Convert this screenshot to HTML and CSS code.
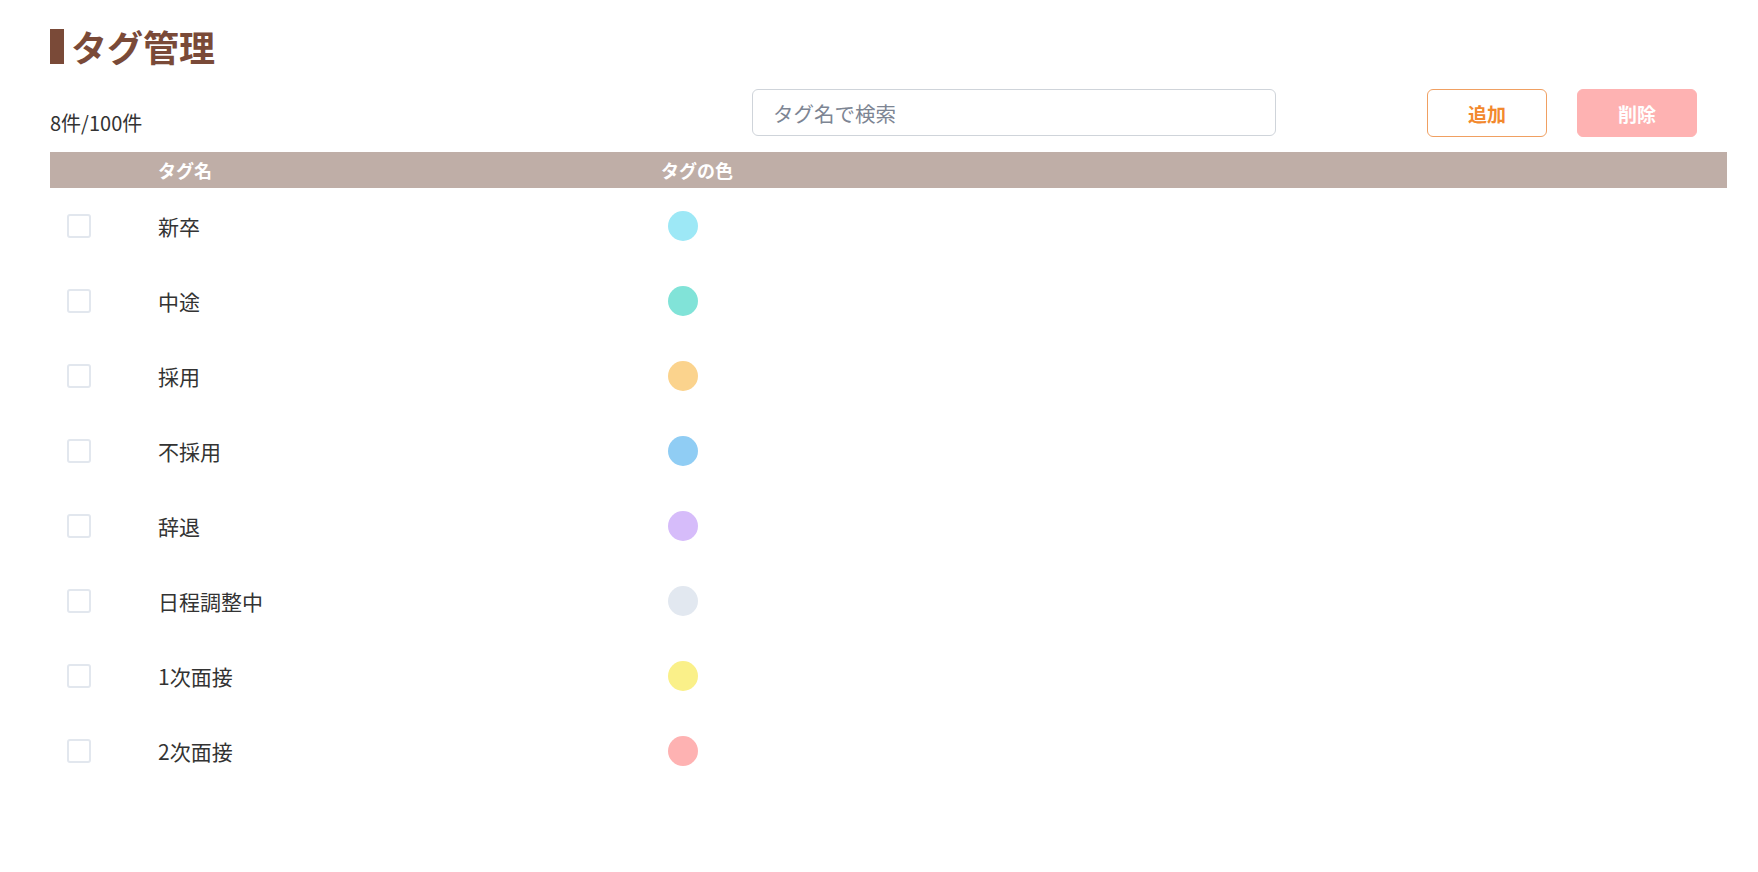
FILE: index.html
```html
<!DOCTYPE html>
<html lang="ja">
<head>
<meta charset="utf-8">
<title>タグ管理</title>
<link rel="stylesheet" href="styles.css">
</head>
<body>
<div class="page">
  <h1 class="title">タグ管理</h1>
  <div class="toolbar">
    <div class="count">8件/100件</div>
    <input class="search" type="text" placeholder="タグ名で検索">
    <div class="actions">
      <button class="btn btn-add">追加</button>
      <button class="btn btn-del">削除</button>
    </div>
  </div>
  <div class="table">
    <div class="thead">
      <div class="c-check"></div>
      <div class="c-name">タグ名</div>
      <div class="c-color">タグの色</div>
    </div>
    <div class="row"><div class="c-check"><span class="box"></span></div><div class="c-name">新卒</div><div class="c-color"><span class="dot cyan"></span></div></div>
    <div class="row"><div class="c-check"><span class="box"></span></div><div class="c-name">中途</div><div class="c-color"><span class="dot teal"></span></div></div>
    <div class="row"><div class="c-check"><span class="box"></span></div><div class="c-name">採用</div><div class="c-color"><span class="dot orange"></span></div></div>
    <div class="row"><div class="c-check"><span class="box"></span></div><div class="c-name">不採用</div><div class="c-color"><span class="dot blue"></span></div></div>
    <div class="row"><div class="c-check"><span class="box"></span></div><div class="c-name">辞退</div><div class="c-color"><span class="dot purple"></span></div></div>
    <div class="row"><div class="c-check"><span class="box"></span></div><div class="c-name">日程調整中</div><div class="c-color"><span class="dot gray"></span></div></div>
    <div class="row"><div class="c-check"><span class="box"></span></div><div class="c-name">1次面接</div><div class="c-color"><span class="dot yellow"></span></div></div>
    <div class="row"><div class="c-check"><span class="box"></span></div><div class="c-name">2次面接</div><div class="c-color"><span class="dot red"></span></div></div>
  </div>
</div>
</body>
</html>
```
FILE: styles.css
```css
* { box-sizing: border-box; }
html, body {
  margin: 0;
  padding: 0;
  background: #ffffff;
}
body {
  font-family: "Noto Sans CJK JP", "Noto Sans", sans-serif;
  color: #333333;
}
.page {
  padding: 29px 31px 0 50px;
}
.title {
  margin: 0;
  height: 35px;
  line-height: 35px;
  border-left: 14px solid #7a4a38;
  padding-left: 7px;
  font-size: 36px;
  font-weight: 700;
  color: #7a4a38;
  letter-spacing: 0;
}
.toolbar {
  margin-top: 25px;
  height: 48px;
  display: grid;
  grid-template-columns: 702px 524px 1fr;
  align-items: stretch;
}
.count {
  align-self: end;
  font-size: 20px;
  line-height: 28px;
  color: #333333;
  padding-bottom: 0;
}
.search {
  height: 47px;
  border: 1px solid #cfd4da;
  border-radius: 6px;
  padding: 0 20px;
  font-family: inherit;
  font-size: 20.5px;
  color: #333;
  outline: none;
}
.search::placeholder {
  color: #7d8593;
}
.actions {
  display: flex;
  justify-content: flex-end;
  gap: 30px;
  padding-right: 30px;
}
.btn {
  width: 120px;
  height: 48px;
  border-radius: 6px;
  font-family: inherit;
  font-size: 19px;
  font-weight: 700;
  cursor: pointer;
}
.btn-add {
  background: #ffffff;
  border: 1px solid #f0a062;
  color: #f2892e;
}
.btn-del {
  background: #feb2b2;
  border: 1px solid #feb2b2;
  color: #ffffff;
}
.table {
  margin-top: 15px;
}
.thead {
  display: flex;
  height: 36px;
  align-items: center;
  background: #bfaea7;
  color: #ffffff;
  font-size: 18px;
  font-weight: 700;
}
.row {
  display: flex;
  height: 75px;
  align-items: center;
  font-size: 21px;
  color: #333333;
}
.c-check {
  width: 108px;
  padding-left: 17px;
  display: flex;
  align-items: center;
}
.c-name {
  width: 503px;
}
.c-color {
  flex: 1;
  display: flex;
  align-items: center;
}
.box {
  display: block;
  width: 24px;
  height: 24px;
  border: 2px solid #e2e7ee;
  border-radius: 3px;
  background: #fff;
}
.dot {
  display: block;
  width: 30px;
  height: 30px;
  border-radius: 50%;
  margin-left: 7px;
}
.cyan { background: #9de8f6; }
.teal { background: #81e3d8; }
.orange { background: #fbd38d; }
.blue { background: #90cdf4; }
.purple { background: #d6bcfa; }
.gray { background: #e2e8f0; }
.yellow { background: #faf089; }
.red { background: #feb2b2; }
```
